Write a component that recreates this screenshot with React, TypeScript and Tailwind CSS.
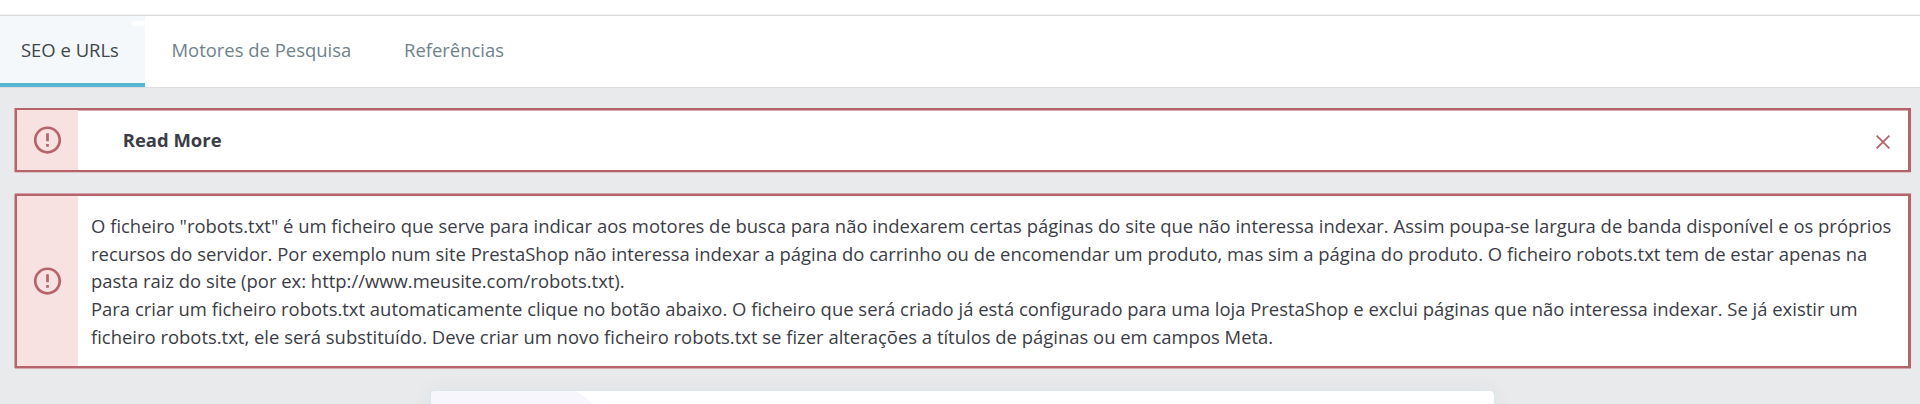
import { useState } from "react"
import type { ReactNode } from "react"

const tabs = [
  { label: "SEO e URLs", className: "w-[145px] pl-[21px]" },
  { label: "Motores de Pesquisa", className: "w-[232px] pl-[26.5px]" },
  { label: "Referências", className: "w-[154px] pl-[27px]" },
]

const lines = [
  'O ficheiro "robots.txt" é um ficheiro que serve para indicar aos motores de busca para não indexarem certas páginas do site que não interessa indexar. Assim poupa-se largura de banda disponível e os próprios',
  "recursos do servidor. Por exemplo num site PrestaShop não interessa indexar a página do carrinho ou de encomendar um produto, mas sim a página do produto. O ficheiro robots.txt tem de estar apenas na",
  "pasta raiz do site (por ex: http://www.meusite.com/robots.txt).",
  "Para criar um ficheiro robots.txt automaticamente clique no botão abaixo. O ficheiro que será criado já está configurado para uma loja PrestaShop e exclui páginas que não interessa indexar. Se já existir um",
  "ficheiro robots.txt, ele será substituído. Deve criar um novo ficheiro robots.txt se fizer alterações a títulos de páginas ou em campos Meta.",
]

function ErrorIcon() {
  return (
    <svg viewBox="-0.1 -0.48 24.2 24.95" className="h-[34px] w-[33px]" fill="#b5646b">
      <path d="M11 15h2v2h-2zm0-8h2v6h-2zm.99-5C6.47 2 2 6.48 2 12s4.47 10 9.99 10C17.52 22 22 17.52 22 12S17.52 2 11.99 2zM12 20c-4.42 0-8-3.58-8-8s3.58-8 8-8 8 3.58 8 8-3.58 8-8 8z" />
    </svg>
  )
}

function Alert({ className, children }: { className: string; children: ReactNode }) {
  return (
    <div className={`flex border-2 border-r-[3px] border-[#b5646b] bg-white ${className}`}>
      <div className="flex w-[61px] shrink-0 items-center justify-center bg-[#f7e1e1]">
        <ErrorIcon />
      </div>
      {children}
    </div>
  )
}

export default function App() {
  const [active, setActive] = useState(0)

  return (
    <div className="h-[404px] overflow-hidden bg-[#e9eaeb] font-['Open_Sans',sans-serif] text-[18.46px] leading-[27.65px] text-[#3b3d46]">
      <div className="box-content h-[15px] border-b border-[#dddedf] bg-white shadow-[inset_0_-1px_0_#f0f0f0]" />

      {/* Tabs */}
      <nav className="flex h-[72px] border-b border-[#dcdddf] bg-white">
        {tabs.map((tab, i) => (
          <button
            key={tab.label}
            onClick={() => setActive(i)}
            className={`relative h-[71px] whitespace-nowrap text-left ${tab.className} ${
              active === i
                ? "border-b-4 border-[#57b6d2] bg-[#f4f8fb] text-[#414647]"
                : "pb-1 text-[#6e828a]"
            }`}
          >
            {tab.label}
            {active === i && <span className="absolute top-[5px] right-0 h-[5px] w-[13px] rounded-sm bg-white" />}
          </button>
        ))}
      </nav>

      {/* Alerts */}
      <div className="flex flex-col gap-[22px] pt-[20px] pr-[9px] pl-[15px]">
        <Alert className="h-[64px] shadow-[-1px_0_0_#d0a3a8,0_1px_0_#dfc3c6,inset_0_1px_0_#daacb0]">
          <div className="flex flex-1 items-center justify-between pr-[18px] pl-[44.8px]">
            <span className="font-bold">Read More</span>
            <button aria-label="Fechar">
              <svg viewBox="0 0 14 14" className="mt-[4px] h-[14px] w-[14px]" stroke="#b5646b" strokeWidth="1.8">
                <path d="M.6.6l12.8 12.8M13.4.6L.6 13.4" />
              </svg>
            </button>
          </div>
        </Alert>

        <Alert className="h-[174px] shadow-[-1px_0_0_#d0a3a8,0_1px_0_#d5a9ad,0_-1px_0_#d0a3a8]">
          <div className="flex-1 pt-[16px] pl-[13px] text-[18.47px] whitespace-nowrap">
            {lines.map((line) => (
              <p key={line}>{line}</p>
            ))}
          </div>
        </Alert>
      </div>

      {/* Card */}
      <div className="mt-[22px] ml-[430px] h-[40px] w-[1065px] overflow-hidden rounded-[5px] border border-[#d9e8ec] bg-white shadow-[0_0_22px_rgba(40,60,60,0.05)]">
        <svg viewBox="0 0 180 40" className="h-[40px] w-[180px]" fill="#f6f6fc">
          <path d="M0 0h145q5 3 17 13l18 20v7H0z" />
        </svg>
      </div>
    </div>
  )
}
